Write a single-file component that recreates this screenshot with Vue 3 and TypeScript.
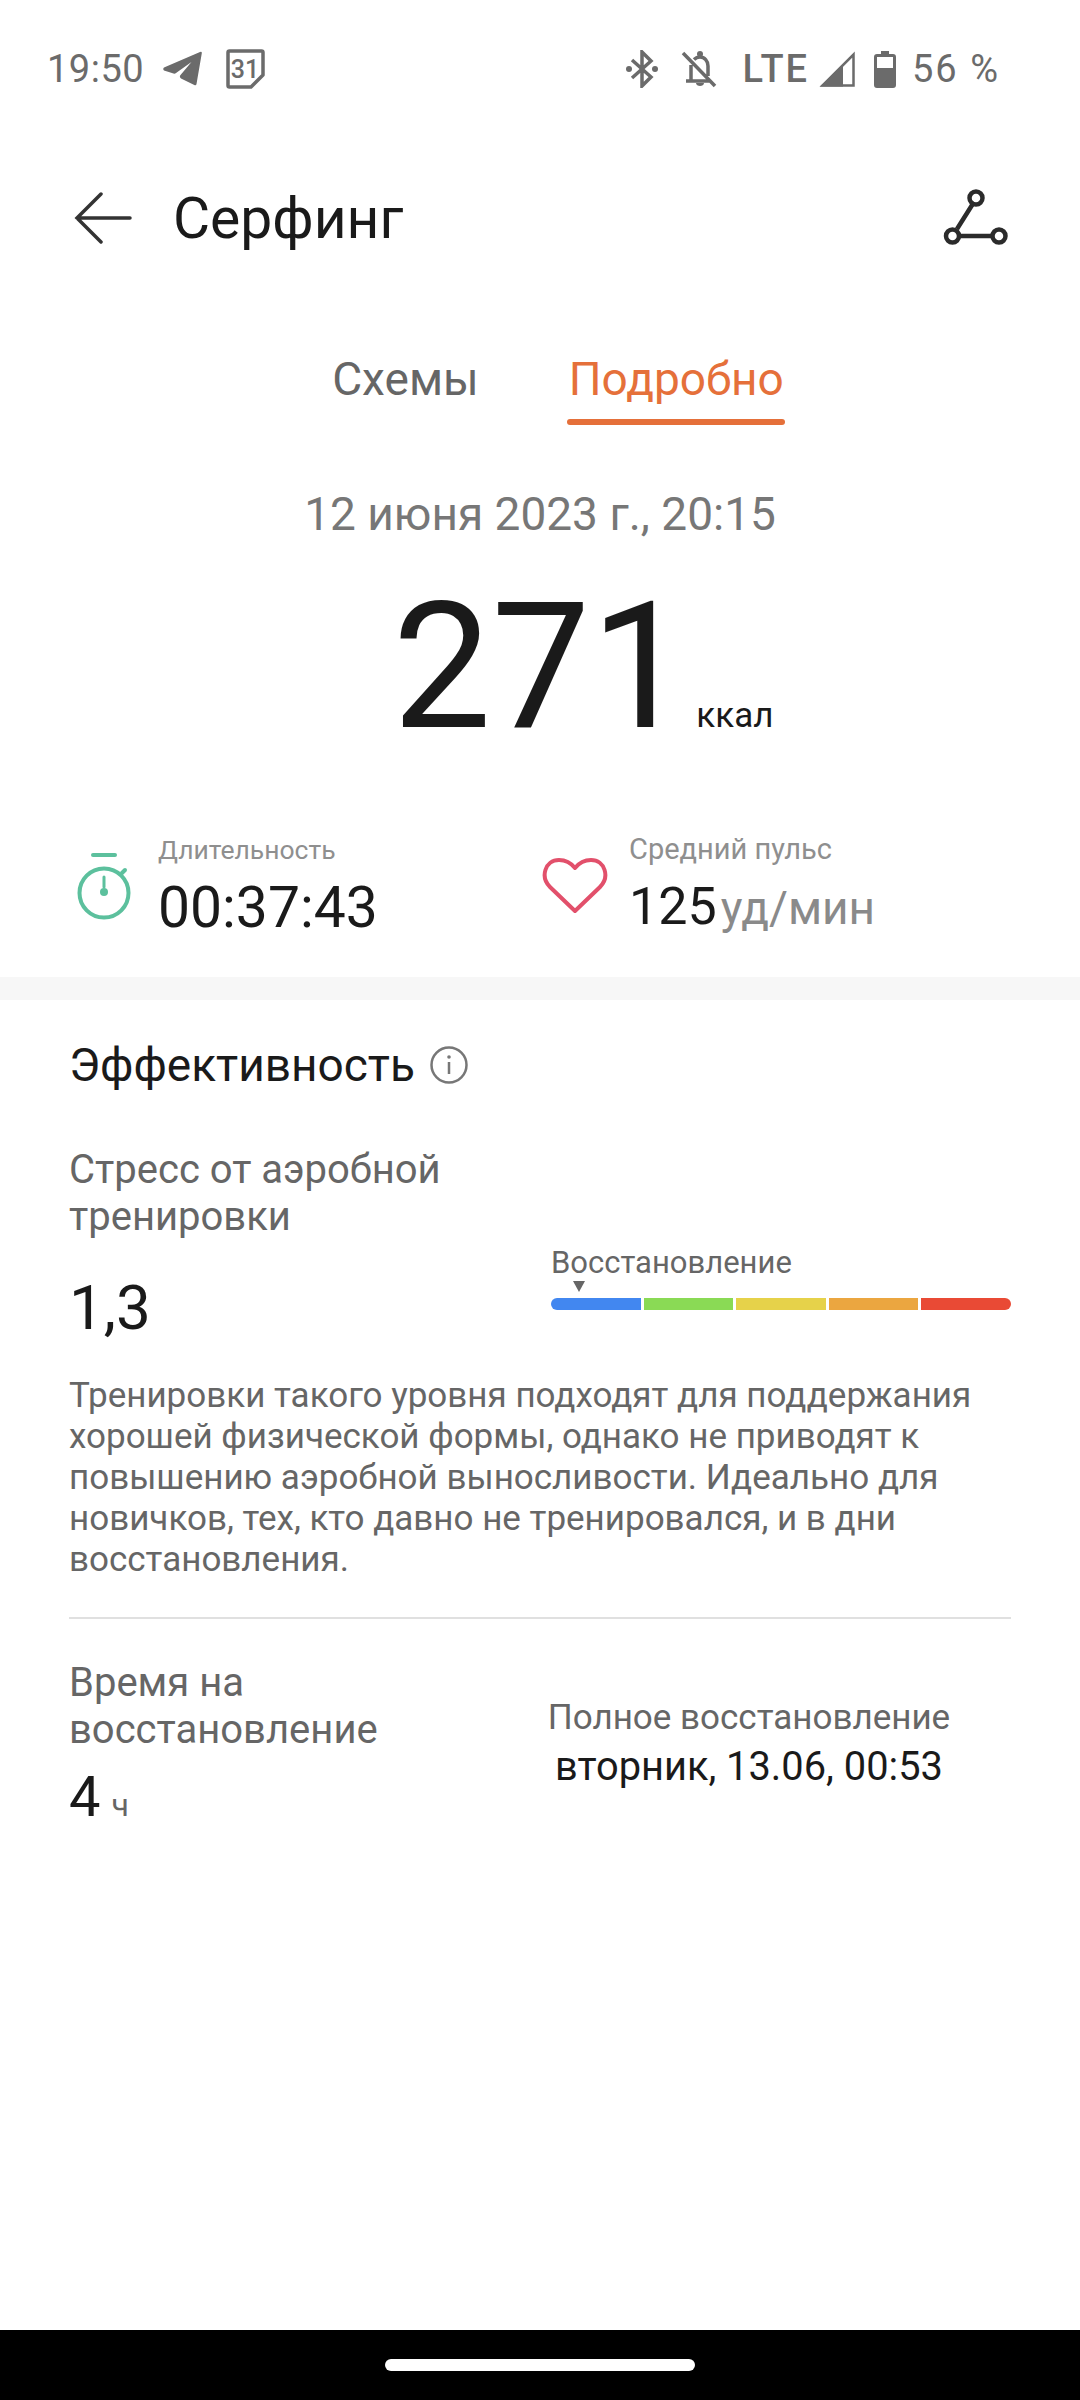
<template>
  <div class="screen">
    <div class="status-bar">
      <div class="status-left">
        <span class="clock">19:50</span>
        <svg class="ic-telegram" width="40" height="36" viewBox="0 0 40 36">
          <path d="M1 16.500 37 1q2-.8 1.800 1.200L33.500 33q-.4 2-2.200 1L18 27.500q-2-1.500-.5-3.500L28.500 11 13 22q-1 1-2.500.5L1 19.500q-1.500-1.500 0-3Z" fill="#6b6b6b" />
        </svg>
        <svg class="ic-cal" width="39" height="40" viewBox="0 0 39 40">
          <path d="M3.500 2h32a1.500 1.500 0 0 1 1.500 1.500V26L25 38H3.500A1.500 1.500 0 0 1 2 36.500V3.500A1.500 1.500 0 0 1 3.500 2Z" fill="none" stroke="#6b6b6b" stroke-width="3.500" stroke-linejoin="round" />
          <text x="19" y="28.500" class="cal-num">31</text>
        </svg>
      </div>
      <div class="status-right">
        <svg width="32" height="38" viewBox="0 0 32 38" class="ic-bt">
          <path d="M6 10 25 27 16 36V2l9 9L6 28" fill="none" stroke="#6b6b6b" stroke-width="3.500" />
          <circle cx="3" cy="19" r="3" fill="#6b6b6b" />
          <circle cx="29" cy="19" r="3" fill="#6b6b6b" />
        </svg>
        <svg width="36" height="38" viewBox="0 0 36 38" class="ic-bell">
          <path d="M5 31h24M10 31V15M27 26V16c0-5-3.500-9-8-9-2.500 0-4.500 1-6 2.500M2 3l32 33" fill="none" stroke="#6b6b6b" stroke-width="3.500" />
          <circle cx="19" cy="4" r="3" fill="#6b6b6b" />
          <path d="M15 33h8c0 4-8 4-8 0Z" fill="#6b6b6b" />
        </svg>
        <span class="lte">LTE</span>
        <svg width="36" height="36" viewBox="0 0 36 36" class="ic-signal">
          <path d="M34.500 3.500V34.500H3.500Z" fill="none" stroke="#6b6b6b" stroke-width="2.500" />
          <path d="M24 14 V35.500 H1 Z" fill="#6b6b6b" />
        </svg>
        <svg width="22" height="38" viewBox="0 0 22 38" class="ic-batt">
          <path d="M7 1h8v3h4a3 3 0 0 1 3 3v28a3 3 0 0 1-3 3H3a3 3 0 0 1-3-3V7a3 3 0 0 1 3-3h4Z" fill="#6b6b6b" />
          <rect x="3" y="7" width="16" height="11" fill="#fff" />
        </svg>
        <span class="percent">56 %</span>
      </div>
    </div>

    <header class="top-bar">
      <svg width="58" height="52" viewBox="0 0 58 52" class="ic-back">
        <path d="M56 26H3M27 2 3 26l24 24" fill="none" stroke="#333" stroke-width="3.500" stroke-linecap="round" />
      </svg>
      <h1>Серфинг</h1>
      <svg width="66" height="58" viewBox="0 0 66 58" class="ic-route">
        <path d="M31 13 14 40M16 47h33" fill="none" stroke="#2b2b2b" stroke-width="4.500" />
        <circle cx="33" cy="9" r="6.500" fill="none" stroke="#2b2b2b" stroke-width="4.500" />
        <circle cx="9.500" cy="47" r="6.500" fill="none" stroke="#2b2b2b" stroke-width="4.500" />
        <circle cx="56" cy="47" r="6.500" fill="none" stroke="#2b2b2b" stroke-width="4.500" />
      </svg>
    </header>

    <nav class="tabs">
      <span class="tab">Схемы</span>
      <span class="tab active">Подробно</span>
    </nav>

    <div class="date">12 июня 2023 г., 20:15</div>
    <div class="calories">
      <span class="cal-value">271</span>
      <span class="cal-unit">ккал</span>
    </div>

    <div class="stats">
      <div class="stat stat-time">
        <svg width="58" height="68" viewBox="0 0 58 68" class="stat-icon">
          <path d="M18 3h22" stroke="#5cc09d" stroke-width="4" stroke-linecap="round" fill="none" />
          <circle cx="29" cy="41" r="24.500" fill="none" stroke="#5cc09d" stroke-width="4" />
          <path d="M29 25v10" stroke="#5cc09d" stroke-width="3" stroke-linecap="round" />
          <circle cx="29" cy="40" r="4" fill="#5cc09d" />
          <path d="M47 21l3-3" stroke="#5cc09d" stroke-width="4" stroke-linecap="round" />
        </svg>
        <div>
          <div class="stat-label">Длительность</div>
          <div class="stat-value">00:37:43</div>
        </div>
      </div>
      <div class="stat stat-pulse">
        <svg width="66" height="58" viewBox="0 0 66 58" class="stat-icon">
          <path d="M33 54 8 30C-2 20 3 3 17 3c7 0 12 3 16 8 4-5 9-8 16-8 14 0 19 17 9 27Z" fill="none" stroke="#e2506b" stroke-width="4" stroke-linejoin="round" />
        </svg>
        <div>
          <div class="stat-label pulse-label">Средний пульс</div>
          <div class="stat-value pulse-value">125<span class="stat-unit">уд/мин</span></div>
        </div>
      </div>
    </div>

    <div class="band"></div>

    <section class="perf">
      <h2>
        Эффективность
        <svg width="38" height="38" viewBox="0 0 38 38">
          <circle cx="19" cy="19" r="17.500" fill="none" stroke="#777" stroke-width="2.500" />
          <path d="M19 16v12" stroke="#777" stroke-width="2.500" />
          <circle cx="19" cy="11" r="1.800" fill="#777" />
        </svg>
      </h2>

      <div class="metric">
        <div class="metric-left">
          <div class="metric-title">Стресс от аэробной тренировки</div>
          <div class="metric-num">1,3</div>
        </div>
        <div class="scale">
          <div class="scale-label">Восстановление</div>
          <div class="scale-arrow"></div>
          <div class="scale-bar">
            <span v-for="c in segments" :key="c" :style="{ background: c }"></span>
          </div>
        </div>
      </div>

      <p class="desc">Тренировки такого уровня подходят для поддержания хорошей физической формы, однако не приводят к повышению аэробной выносливости. Идеально для новичков, тех, кто давно не тренировался, и в дни восстановления.</p>

      <div class="divider"></div>

      <div class="recovery">
        <div class="recovery-left">
          <div class="metric-title">Время на восстановление</div>
          <div class="hours"><span class="hours-num">4</span><span class="hours-unit">ч</span></div>
        </div>
        <div class="recovery-right">
          <div class="full-label">Полное восстановление</div>
          <div class="full-value">вторник, 13.06, 00:53</div>
        </div>
      </div>
    </section>

    <div class="spacer"></div>
    <div class="nav-bar"><div class="pill"></div></div>
  </div>
</template>

<script setup lang="ts">
const segments: string[] = ['#4287f0', '#8ada55', '#e6d24a', '#eba640', '#e94a35']
</script>

<style>
html, body { margin: 0; background: #fff; }
</style>

<style scoped>
.screen {
  width: 1080px;
  height: 2400px;
  display: flex;
  flex-direction: column;
  background: #fff;
  font-family: Roboto, "Liberation Sans", sans-serif;
  color: #1a1a1a;
}

.status-bar {
  height: 68px;
  padding: 0 80px 0 47px;
  margin-top: 35px;
  display: flex;
  justify-content: space-between;
  align-items: center;
  color: #6b6b6b;
  font-size: 38px;
}

.status-left, .status-right {
  display: flex;
  align-items: center;
}

.clock { letter-spacing: .5px; }
.ic-telegram { margin-left: 19px; }
.ic-cal { margin-left: 23px; }
.cal-num {
  font-size: 25px;
  font-weight: 500;
  fill: #6b6b6b;
  text-anchor: middle;
}

.ic-bell { margin-left: 23px; }
.lte { margin-left: 25px; font-size: 38px; font-weight: 500; letter-spacing: 2px; }
.ic-signal { margin-left: 10px; }
.ic-batt { margin-left: 19px; }
.percent { margin-left: 16px; letter-spacing: 2px; }

.top-bar {
  display: flex;
  align-items: center;
  padding: 0 71px 0 74px;
  margin-top: 54px;
  height: 122px;
}

.top-bar h1 {
  margin: 0 0 0 41px;
  font-size: 57px;
  font-weight: 400;
  flex: 1;
}

.tabs {
  display: flex;
  justify-content: center;
  gap: 90px;
  margin-top: 63px;
  padding-left: 36px;
  font-size: 46px;
  color: #666;
}

.tab {
  padding-top: 10px;
}

.tab::after {
  content: "";
  display: block;
  height: 6px;
  margin: 13px -1px 0 -2px;
  border-radius: 3px;
}

.tab.active {
  color: #e5703a;
}

.tab.active::after {
  background: #e5703a;
}

.date {
  margin-top: 63px;
  text-align: center;
  font-size: 46px;
  color: #777;
  line-height: 52px;
}

.calories {
  display: flex;
  justify-content: center;
  align-items: baseline;
  margin-top: 32px;
  height: 190px;
  padding-left: 86px;
}

.cal-value {
  font-size: 176px;
  line-height: 190px;
}

.cal-unit {
  margin-left: 7px;
  font-size: 35px;
}

.stats {
  display: flex;
  margin-top: 64px;
  height: 126px;
}

.stat {
  display: flex;
  align-items: center;
}

.stat-time { width: 465px; padding-left: 75px; }
.stat-pulse { padding-left: 2px; }
.stat-icon { margin-top: -6px; }
.stat-time .stat-icon { margin-right: 25px; }
.stat-pulse .stat-icon { margin-right: 21px; }

.stat-label {
  font-size: 26.500px;
  line-height: 34px;
  margin-bottom: 3px;
  color: #8f8f8f;
}

.pulse-label { font-size: 29px; }

.stat-value {
  font-size: 57px;
  line-height: 76px;
}

.pulse-value { font-size: 52px; }

.stat-unit {
  margin-left: 4px;
  font-size: 46px;
  color: #8a8a8a;
}

.band {
  margin-top: 25px;
  height: 23px;
  background: #f7f7f7;
}

.perf {
  padding: 0 69px;
}

.perf h2 {
  margin: 38px 0 0;
  font-size: 46px;
  font-weight: 400;
  display: flex;
  align-items: center;
  gap: 15px;
}

.metric {
  display: flex;
  justify-content: space-between;
  margin-top: 54px;
}

.metric-left { width: 440px; }

.metric-title {
  font-size: 40px;
  line-height: 47px;
  color: #666;
}

.metric-num {
  font-size: 62px;
  line-height: 80px;
  margin-top: 28px;
}

.scale {
  width: 460px;
  padding-top: 99px;
}

.scale-label {
  font-size: 31px;
  line-height: 36px;
  color: #666;
}

.scale-arrow {
  width: 0;
  margin: 0 0 0 22px;
  border-left: 6px solid transparent;
  border-right: 6px solid transparent;
  border-top: 11px solid #666;
}

.scale-bar {
  display: flex;
  gap: 3px;
  height: 12px;
  margin-top: 6px;
  border-radius: 6px;
  overflow: hidden;
}

.scale-bar span { flex: 1; }

.desc {
  margin: 28px 0 0;
  font-size: 35px;
  line-height: 40.900px;
  color: #666;
}

.divider {
  margin-top: 36px;
  height: 2px;
  background: #e0e0e0;
}

.recovery {
  display: flex;
  justify-content: space-between;
  margin-top: 40px;
}

.recovery-left { width: 340px; }

.hours {
  margin-top: 13px;
  line-height: 62px;
}

.hours-num { font-size: 56px; }
.hours-unit { font-size: 32px; color: #666; margin-left: 11px; }

.recovery-right {
  width: 430px;
  margin-right: 47px;
  padding-top: 37px;
  text-align: center;
}

.full-label {
  font-size: 35px;
  line-height: 44px;
  color: #666;
}

.full-value {
  font-size: 39.800px;
  line-height: 53px;
  color: #1a1a1a;
}

.spacer { flex: 1; }

.nav-bar {
  height: 70px;
  background: #000;
  display: flex;
  justify-content: center;
  align-items: center;
}

.pill {
  width: 310px;
  height: 12px;
  background: #fff;
  border-radius: 6px;
}
</style>
